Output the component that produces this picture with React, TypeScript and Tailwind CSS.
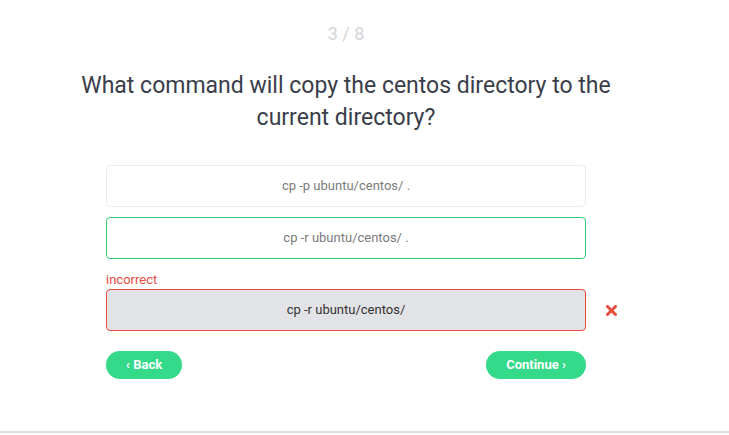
import React from "react";

const font = { fontFamily: "Roboto, 'Liberation Sans', sans-serif" };

export default function App() {
  return (
    <div className="w-[729px] h-[433px] bg-white border-b-2 border-[#dcdcdc] box-border" style={font}>
      <div className="flex flex-col w-[480px] ml-[106px] pt-[21px]">
        <div className="h-[26px] text-center text-[18px] leading-[26px] text-[#d3d5d8]">3 / 8</div>
        <div className="mt-[23px] -mx-[32px] text-center text-[23px] leading-[32px] text-[#3a3d4a]">
          What command will copy the centos directory to the current directory?
        </div>
        <div className="mt-[31px] flex flex-col">
          <div className="h-[42px] rounded-[4px] border border-[#ececec] flex items-center justify-center text-[13px] text-[#7a7a7a]">
            cp -p ubuntu/centos/ .
          </div>
          <div className="mt-[10px] h-[42px] rounded-[4px] border border-[#2ecc71] flex items-center justify-center text-[13px] text-[#7a7a7a]">
            cp -r ubuntu/centos/ .
          </div>
          <div className="mt-[12px] h-[18px] text-[13px] leading-[18px] text-[#e74c3c]">incorrect</div>
          <div className="relative h-[42px] rounded-[4px] border border-[#e74c3c] bg-[#e2e3e7] flex items-center justify-center text-[13px] text-[#333]">
            cp -r ubuntu/centos/
            <svg className="absolute left-[499px] top-[15px]" width="11" height="11" viewBox="0 0 11 11">
              <path d="M1.5 1.5 L9.5 9.5 M9.5 1.5 L1.5 9.5" stroke="#e74c3c" strokeWidth="3" strokeLinecap="round" />
            </svg>
          </div>
          <div className="mt-[20px] flex justify-between">
            <button className="w-[76px] h-[28px] rounded-full bg-[#34d98a] text-white font-bold text-[13px]">
              ‹ Back
            </button>
            <button className="w-[100px] h-[28px] rounded-full bg-[#34d98a] text-white font-bold text-[13px]">
              Continue ›
            </button>
          </div>
        </div>
      </div>
    </div>
  );
}
